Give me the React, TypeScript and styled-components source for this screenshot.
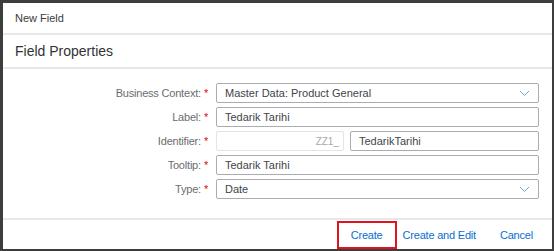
import { Fragment } from "react";
import styled, { createGlobalStyle } from "styled-components";

const Global = createGlobalStyle`
  html, body {
    margin: 0;
    padding: 0;
    background: #3d3d3d;
  }
  body {
    font-family: "Liberation Sans", Arial, sans-serif;
  }
`;

const Frame = styled.div`
  width: 554px;
  height: 251px;
  box-sizing: border-box;
  padding: 3px 2px 2px 3px;
  background: #3d3d3d;
`;

const Dialog = styled.div`
  width: 549px;
  height: 246px;
  background: #fff;
  display: flex;
  flex-direction: column;
`;

const Header = styled.div`
  height: 30px;
  display: flex;
  align-items: center;
  padding: 0 12px;
  font-size: 11px;
  color: #3b3b3b;
  border-bottom: 2px solid #e8e8e8;
`;

const SubHeader = styled.div`
  height: 32px;
  display: flex;
  align-items: center;
  padding: 0 12px;
  font-size: 14px;
  color: #333;
  border-bottom: 2px solid #e8e8e8;
`;

const Form = styled.div`
  flex: 1;
  display: grid;
  grid-template-columns: 205px 1fr;
  column-gap: 8px;
  row-gap: 4px;
  align-content: start;
  padding: 14px 13px 0 0;
`;

const Label = styled.div`
  height: 20px;
  display: flex;
  align-items: center;
  justify-content: flex-end;
  font-size: 11px;
  color: #6a6d70;
  letter-spacing: -0.2px;

  span {
    color: #e00;
    margin-left: 3px;
    font-size: 11px;
  }
`;

const Input = styled.div<{ $grow?: boolean }>`
  ${(p) => (p.$grow ? "flex: 1;" : "")}
  height: 20px;
  box-sizing: border-box;
  border: 1px solid #a9adb1;
  border-radius: 2px;
  display: flex;
  align-items: center;
  justify-content: space-between;
  padding: 0 8px;
  font-size: 11px;
  color: #40444a;
  background: #fff;
`;

const IdRow = styled.div`
  display: flex;
  gap: 6px;
`;

const Prefix = styled.div`
  width: 128px;
  height: 20px;
  box-sizing: border-box;
  border: 1px solid #e2e4e6;
  border-radius: 2px;
  display: flex;
  align-items: center;
  justify-content: flex-end;
  padding-right: 4px;
  font-size: 10px;
  color: #a5a9ad;
`;

const Chevron = () => (
  <svg width="11" height="7" viewBox="0 0 11 7">
    <path d="M1 1 L5.5 5.5 L10 1" fill="none" stroke="#7aa3cc" strokeWidth="1" />
  </svg>
);

const Footer = styled.div`
  height: 29px;
  border-top: 2px solid #e8e8e8;
  display: flex;
  align-items: stretch;
  justify-content: flex-end;
  padding-right: 7px;
`;

const Button = styled.div<{ $marked?: boolean }>`
  display: flex;
  align-items: center;
  padding: 0 ${(p) => (p.$marked ? "12px" : "10px")};
  font-size: 11px;
  letter-spacing: -0.2px;
  color: #0a6ed1;
  box-sizing: border-box;
  border: 2px solid ${(p) => (p.$marked ? "#e0141e" : "transparent")};
  margin: 1px ${(p) => (p.$marked ? "-6px" : "0")} 0 0;
`;

const ROWS = [
  { label: "Business Context:", value: "Master Data: Product General", select: true },
  { label: "Label:", value: "Tedarik Tarihi" },
  { label: "Identifier:", value: "TedarikTarihi", id: true },
  { label: "Tooltip:", value: "Tedarik Tarihi" },
  { label: "Type:", value: "Date", select: true },
];

export default function App() {
  return (
    <>
      <Global />
      <Frame>
        <Dialog>
          <Header>New Field</Header>
          <SubHeader>Field Properties</SubHeader>
          <Form>
            {ROWS.map((r) => (
              <Fragment key={r.label}>
                <Label>
                  {r.label}
                  <span>*</span>
                </Label>
                {r.id ? (
                  <IdRow>
                    <Prefix>ZZ1_</Prefix>
                    <Input $grow>{r.value}</Input>
                  </IdRow>
                ) : (
                  <Input>
                    {r.value}
                    {r.select && <Chevron />}
                  </Input>
                )}
              </Fragment>
            ))}
          </Form>
          <Footer>
            <Button $marked>Create</Button>
            <Button>Create and Edit</Button>
            <Button>Cancel</Button>
          </Footer>
        </Dialog>
      </Frame>
    </>
  );
}
